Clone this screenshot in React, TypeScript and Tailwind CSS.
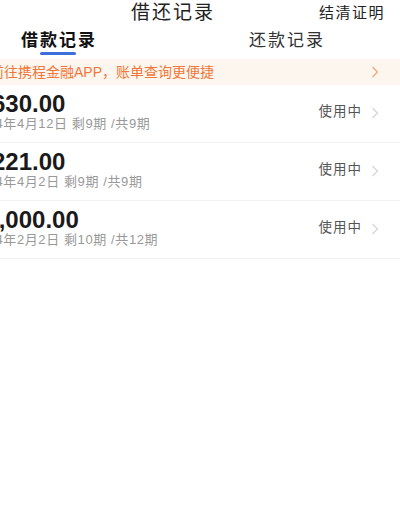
interface Loan {
  amount: string
  date: string
  status: string
}

const loans: Loan[] = [
  { amount: "1,630.00", date: "2024年4月12日 剩9期 /共9期", status: "使用中" },
  { amount: "1,221.00", date: "2024年4月2日 剩9期 /共9期", status: "使用中" },
  { amount: "10,000.00", date: "2024年2月2日 剩10期 /共12期", status: "使用中" },
]

function Chevron({ color }: { color: string }) {
  return (
    <svg width="8" height="12" viewBox="0 0 8 12" fill="none">
      <polyline points="1.5,1 6.5,6 1.5,11" stroke={color} strokeWidth="1.2" />
    </svg>
  )
}

export default function App() {
  return (
    <div className="w-[400px] h-[510px] overflow-hidden bg-white">
      {/* page is wider than the window and scrolled left */}
      <div className="w-[456px] -ml-[56px] font-['Liberation_Sans','Noto_Sans_CJK_SC',sans-serif] text-[#222]">
        {/* title bar */}
        <div className="grid grid-cols-[1fr_auto_1fr] items-center h-[24px]">
          <div />
          <h1 className="text-[19px] tracking-[2px] leading-[24px] pl-[2px] pt-[1px]">借还记录</h1>
          <div className="flex justify-end pr-[15px]">
            <span className="text-[15px] tracking-[1.5px] leading-[20px] text-[#222]">结清证明</span>
          </div>
        </div>

        {/* tabs */}
        <div className="grid grid-cols-2 pt-[6px] pb-[4px]">
          <div className="flex flex-col items-center">
            <span className="text-[17px] tracking-[2px] leading-[22px] font-semibold text-[#111] pl-[2px]">借款记录</span>
            <div className="w-[36px] h-[3px] rounded-full bg-[#3d6fdb]" />
          </div>
          <div className="flex flex-col items-center">
            <span className="text-[17px] tracking-[2px] leading-[22px] text-[#333] pl-[2px]">还款记录</span>
            <div className="w-[36px] h-[3px]" />
          </div>
        </div>

        {/* banner */}
        <div className="flex items-center justify-between h-[26px] bg-[#fdf6ef] pl-[46px] pr-[21px]">
          <span className="text-[14px] text-[#f0763a] leading-[18px]">前往携程金融APP，账单查询更便捷</span>
          <Chevron color="#f0a277" />
        </div>

        {/* loan list */}
        {loans.map((loan, i) => (
          <div key={i} className="flex justify-between h-[58px] border-b border-[#f2f2f2] pl-[28px] pr-[21px]">
            <div className="flex flex-col pt-[7px]">
              <span className="text-[24px] font-bold leading-[24px] text-[#1a1a1a]">{loan.amount}</span>
              <span className="text-[13px] tracking-[0.6px] leading-[16px] text-[#999]">{loan.date}</span>
            </div>
            <div className="flex items-center gap-[9px] pb-[2px]">
              <span className="text-[13.5px] tracking-[1px] text-[#555]">{loan.status}</span>
              <Chevron color="#d4d4d4" />
            </div>
          </div>
        ))}
      </div>
    </div>
  )
}
